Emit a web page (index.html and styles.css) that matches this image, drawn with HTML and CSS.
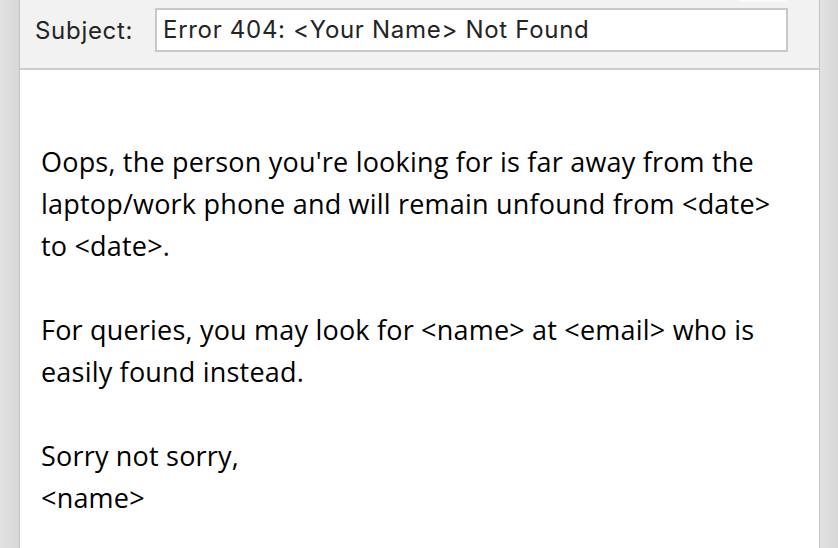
FILE: index.html
```html
<!DOCTYPE html>
<html lang="en">
<head>
    <meta charset="UTF-8">
    <title>Out of office</title>
    <link rel="stylesheet" href="styles.css">
</head>
<body>
    <div class="window">
        <div class="side left"></div>
        <div class="compose">
            <div class="header">
                <span class="tab-edge"></span>
                <label for="subject">Subject:</label>
                <div class="subject" id="subject">Error 404: &lt;Your Name&gt; Not Found</div>
            </div>
            <div class="body">
                <p>Oops, the person you're looking for is far away from the laptop/work phone and will remain unfound from &lt;date&gt; to &lt;date&gt;.</p>
                <p>For queries, you may look for &lt;name&gt; at &lt;email&gt; who is easily found instead.</p>
                <p>Sorry not sorry,<br>&lt;name&gt;</p>
            </div>
        </div>
        <div class="side right"></div>
    </div>
</body>
</html>
```

FILE: styles.css
```css
html, body {
    margin: 0;
    height: 100%;
}
body {
    background: #dedede;
    overflow: hidden;
}
.window {
    display: flex;
    height: 100%;
}
.side {
    width: 19px;
    background: linear-gradient(to right, #e2e2e2, #d8d8d8);
}
.side.left {
    border-right: 1px solid #c4c4c4;
}
.side.right {
    width: 18px;
    border-left: 1px solid #c4c4c4;
}
.compose {
    flex: 1;
    background: #fff;
    display: flex;
    flex-direction: column;
}
.header {
    position: relative;
    flex-shrink: 0;
    height: 68px;
    background: #f2f2f2;
    border-bottom: 2px solid #cdcdcd;
    display: flex;
    align-items: center;
    padding-left: 15px;
    font-family: Inter, "Liberation Sans", sans-serif;
    font-size: 24px;
    letter-spacing: 0.7px;
    color: #242424;
}
.tab-edge {
    position: absolute;
    top: -6px;
    left: 717px;
    width: 50px;
    height: 8px;
    border-radius: 4px;
    background: #fafafa;
}
.header label {
    width: 98px;
    margin-right: 22px;
    margin-top: -8px;
    white-space: nowrap;
}
.subject {
    width: 617px;
    height: 40px;
    margin-top: -8px;
    border: 2px solid #c8c8c8;
    background: #fff;
    padding: 0 6px;
    line-height: 40px;
    white-space: nowrap;
}
.body {
    width: 740px;
    padding: 71px 21px 0;
    font-family: "Open Sans", sans-serif;
    font-size: 27px;
    letter-spacing: 0.2px;
    line-height: 42px;
    color: #000;
}
.body p {
    margin: 0 0 42px;
}
```
